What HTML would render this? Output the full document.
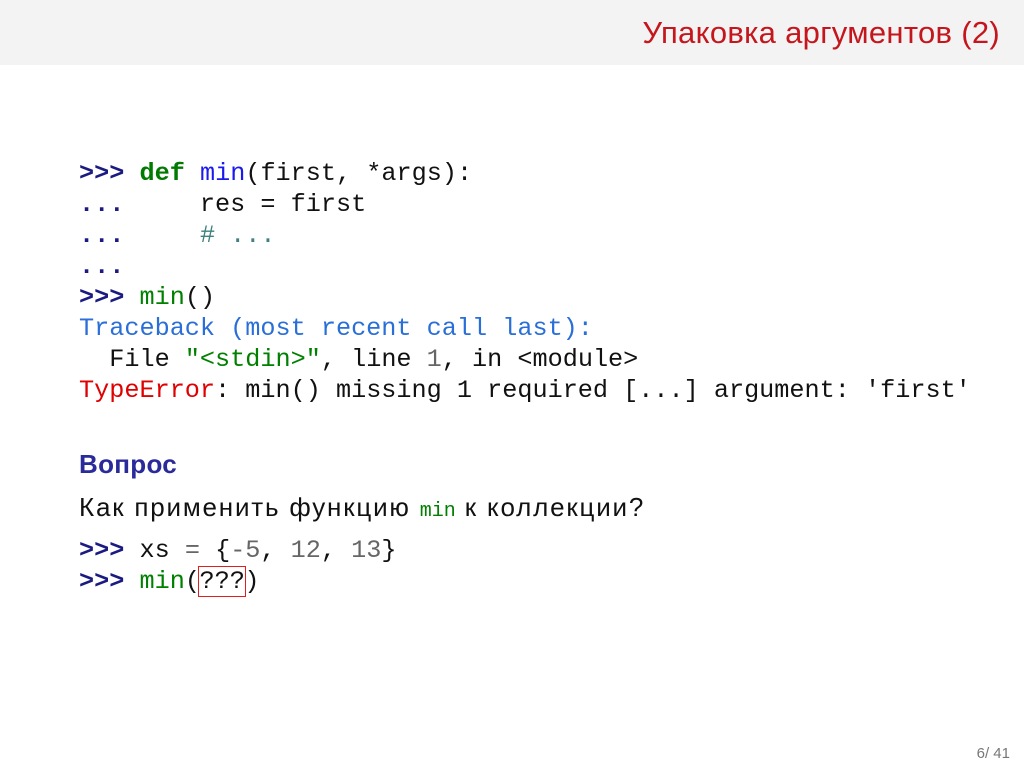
<!DOCTYPE html>
<html><head><meta charset="utf-8"><style>
body{margin:0;width:1024px;height:767px;background:#fff;position:relative;overflow:hidden;font-family:"Liberation Sans","DejaVu Sans",sans-serif}
.hdr{position:absolute;left:0;top:0;width:1024px;height:65px;background:#f3f3f3}
.title{position:absolute;right:24px;top:15px;font-size:31px;letter-spacing:0.3px;color:#c4161c;white-space:nowrap}
pre{margin:0;position:absolute;left:79px;font-family:"Liberation Mono",monospace;font-size:25.2px;line-height:31px;color:#111}
.p{color:#1a1a80;font-weight:bold}
.k{color:#007a00;font-weight:bold}
.f{color:#1a1aee}
.g{color:#008000}
.c{color:#408080}
.b{color:#2a6ed8}
.r{color:#e00000}
.n{color:#666}
.q{position:absolute;left:79px;font-size:26px;color:#111;white-space:nowrap}
.pg{position:absolute;right:14px;top:745px;font-size:15px;color:#777}
.box{border:1.5px solid #e02020;margin:-1.5px}
</style></head><body>
<div class="hdr"></div>
<div class="title">Упаковка аргументов (2)</div>
<pre style="top:158px"><span class="p">&gt;&gt;&gt;</span> <span class="k">def</span> <span class="f">min</span>(first, *args):
<span class="p">...</span>     res = first
<span class="p">...</span>     <span class="c"># ...</span>
<span class="p">...</span>
<span class="p">&gt;&gt;&gt;</span> <span class="g">min</span>()
<span class="b">Traceback (most recent call last):</span>
  File <span class="g">"&lt;stdin&gt;"</span>, line <span class="n">1</span>, in &lt;module&gt;
<span class="r">TypeError</span>: min() missing 1 required [...] argument: 'first'</pre>
<div class="q" style="top:449px;font-weight:bold;color:#2a2a9a;letter-spacing:0.3px">Вопрос</div>
<div class="q" style="top:492px;letter-spacing:1.8px">Как применить функцию <span style="font-family:'Liberation Mono',monospace;font-size:20px;color:#008000;letter-spacing:0">min</span> к коллекции?</div>
<pre style="top:535px"><span class="p">&gt;&gt;&gt;</span> xs <span class="n">=</span> {<span class="n">-5</span>, <span class="n">12</span>, <span class="n">13</span>}
<span class="p">&gt;&gt;&gt;</span> <span class="g">min</span>(<span class="box">???</span>)</pre>
<div class="pg">6/ 41</div>
</body></html>
